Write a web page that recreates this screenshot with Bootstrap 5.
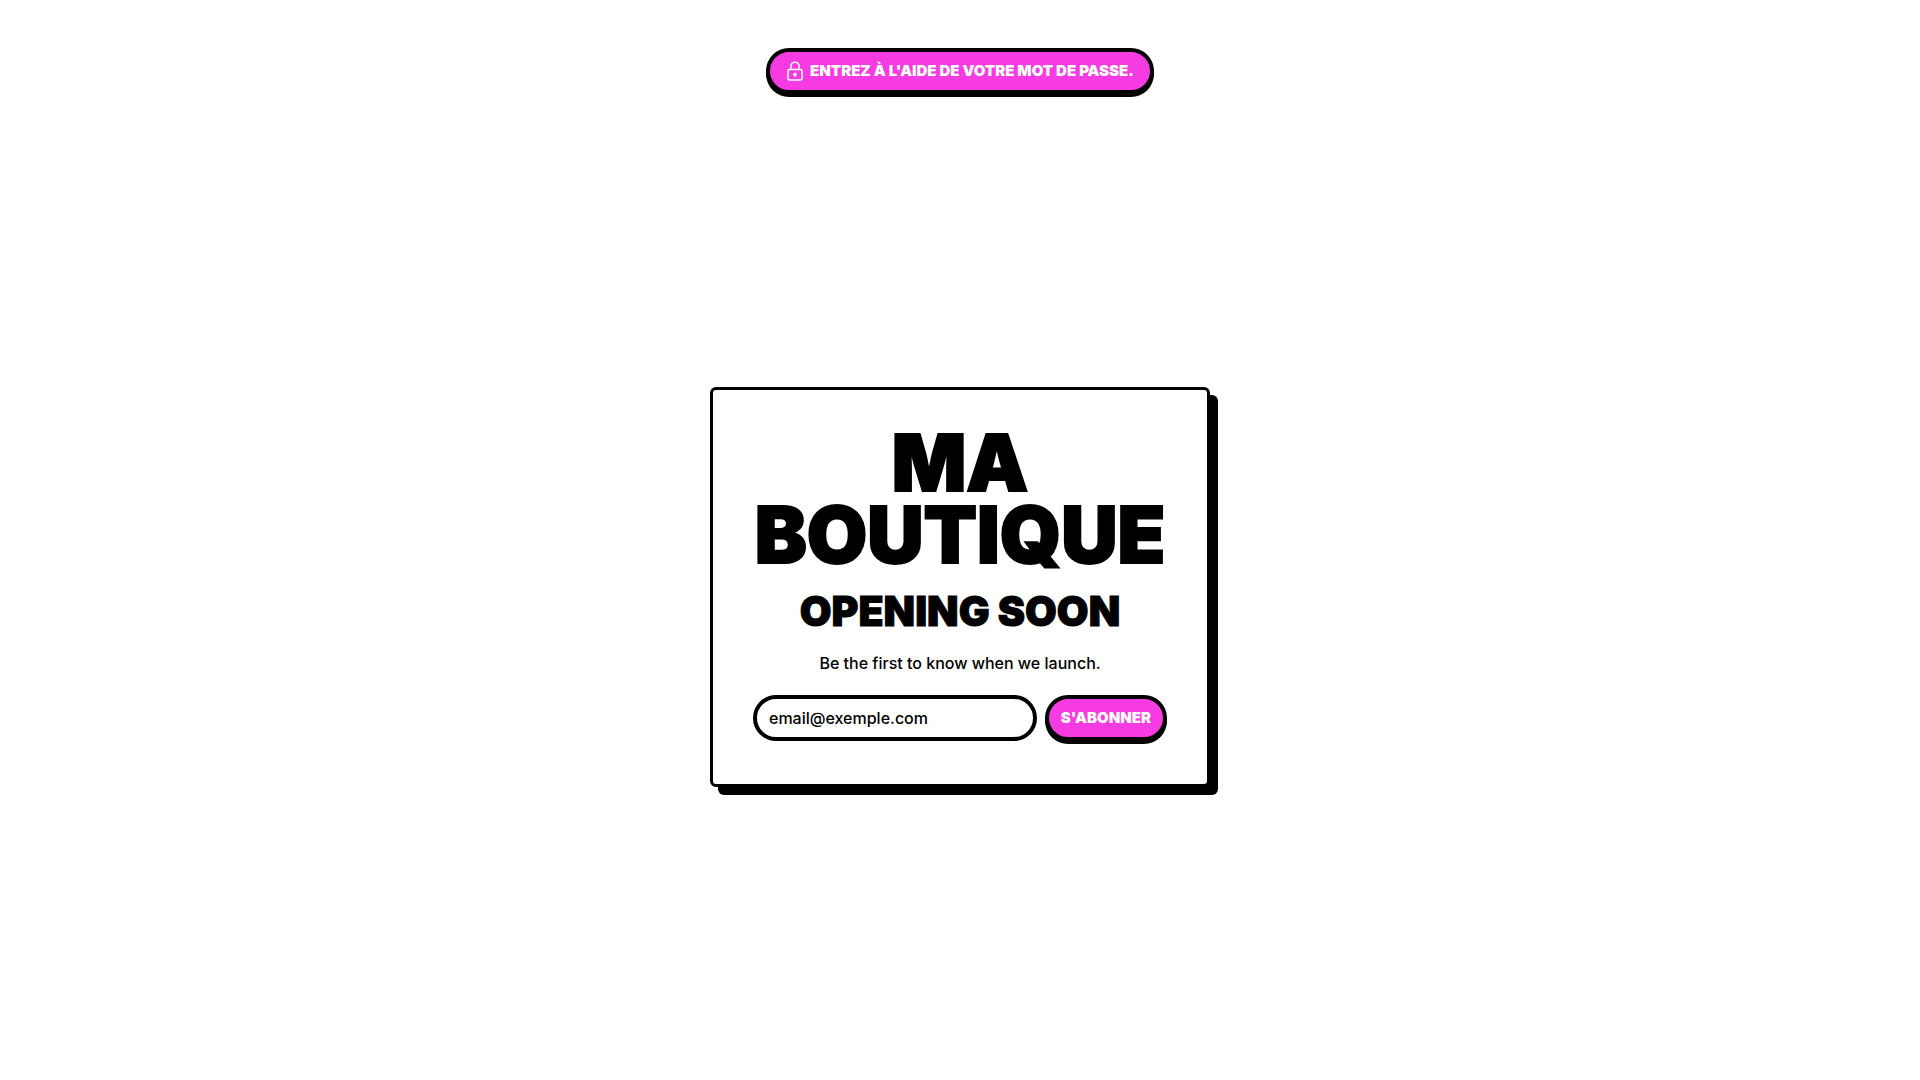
<!DOCTYPE html>
<html lang="fr">
<head>
<meta charset="utf-8">
<meta name="viewport" content="width=device-width, initial-scale=1">
<title>Ma boutique</title>
<link href="https://cdn.jsdelivr.net/npm/bootstrap@5.3.0/dist/css/bootstrap.min.css" rel="stylesheet">
<style>
  body { font-family: Inter, "Liberation Sans", sans-serif; font-weight: 500; color: #000; background: #fff; }
  .site-header { padding-top: 48px; }
  .shop-btn {
    height: 46px; padding: 0 12px; border: 4px solid #000; border-radius: 23px;
    background: #f73be2; color: #fff; box-shadow: 0 3px 0 #000;
    font-size: 15px; font-weight: 900; line-height: 20px; text-transform: uppercase; white-space: nowrap;
  }
  .shop-btn:hover, .shop-btn:active { background: #d92cc6 !important; color: #fff !important; border-color: #000 !important; }
  .unlock-btn { padding: 0 16px; gap: 6px; }
  .launch-card {
    width: 500px; max-width: 100%; padding: 37px 40px 43px;
    border: 3px solid #000; border-radius: 6px; box-shadow: 8px 8px 0 #000;
  }
  .shop-name { font-size: 78px; line-height: 72px; font-weight: 900; -webkit-text-stroke: 2px #000; }
  .launch-title { font-size: 41px; line-height: 48px; font-weight: 900; -webkit-text-stroke: 1px #000; }
  .email-box { height: 46px; padding: 0 12px; border: 4px solid #000; border-radius: 23px; font-weight: 500; color: #000; }
  .email-box::placeholder { color: #000; opacity: 1; }
</style>
</head>
<body class="d-flex flex-column min-vh-100">
  <header class="site-header d-flex justify-content-center">
    <button type="button" class="btn shop-btn unlock-btn d-flex align-items-center">
      <svg width="18" height="22" viewBox="0 0 18 22" fill="none" stroke="#fff" stroke-width="1.5" aria-hidden="true">
        <rect x="2" y="9.5" width="14" height="10.6" rx="1.5"/>
        <path d="M4.9 9.5V6.3a4.1 4.1 0 0 1 8.2 0v3.2"/>
        <circle cx="9" cy="14.5" r="1.8" fill="#fff" stroke="none"/>
        <path d="M9 14.8v2"/>
      </svg>
      <span>Entrez à l'aide de votre mot de passe.</span>
    </button>
  </header>
  <main class="flex-grow-1 d-flex align-items-center justify-content-center">
    <section class="launch-card text-center bg-white">
      <h1 class="shop-name text-uppercase mb-3">Ma boutique</h1>
      <h2 class="launch-title text-uppercase mb-3">Opening soon</h2>
      <p class="mb-3">Be the first to know when we launch.</p>
      <form class="d-flex gap-2 pt-1">
        <input type="email" class="form-control email-box" aria-label="E-mail" placeholder="email@exemple.com">
        <button type="submit" class="btn shop-btn flex-shrink-0">S'abonner</button>
      </form>
    </section>
  </main>
<script src="https://cdn.jsdelivr.net/npm/bootstrap@5.3.0/dist/js/bootstrap.bundle.min.js"></script>
</body>
</html>
